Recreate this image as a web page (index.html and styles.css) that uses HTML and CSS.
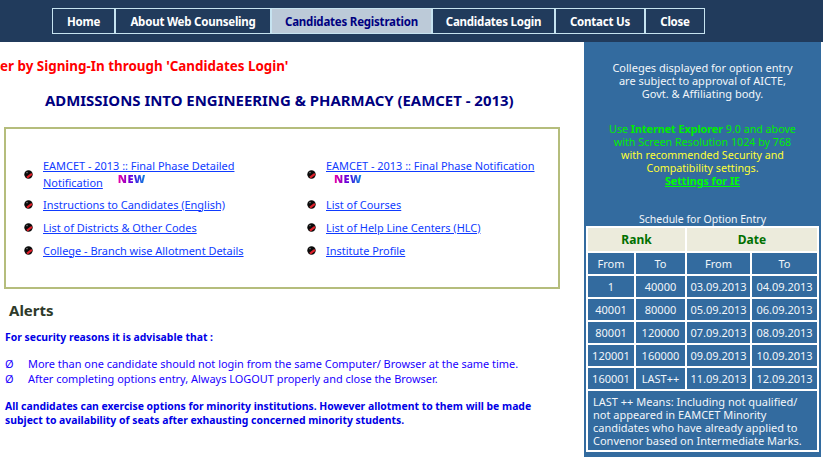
FILE: index.html
```html
<!DOCTYPE html>
<html lang="en">
<head>
<meta charset="utf-8">
<title>EAMCET 2013</title>
<link rel="stylesheet" href="styles.css">
</head>
<body>
<svg class="defs" width="0" height="0" aria-hidden="true"><defs>
  <symbol id="ball" viewBox="0 0 9 9"><circle cx="4.5" cy="4.5" r="4.2" fill="#0a0a0a"/><path d="M3 7.6 7.9 3.8" stroke="#e0202a" stroke-width="2.2"/><circle cx="3" cy="2.6" r=".8" fill="#777"/></symbol>
</defs></svg>
<header class="top">
  <nav class="nav">
    <a class="nav-item w-home">Home</a>
    <a class="nav-item w-about">About Web Counseling</a>
    <a class="nav-item w-reg active">Candidates Registration</a>
    <a class="nav-item w-login">Candidates Login</a>
    <a class="nav-item w-contact">Contact Us</a>
    <a class="nav-item w-close">Close</a>
  </nav>
</header>
<div class="page">
  <main class="content">
    <p class="ticker">er by Signing-In through 'Candidates Login'</p>
    <h1 class="title">ADMISSIONS INTO ENGINEERING &amp; PHARMACY (EAMCET - 2013)</h1>
    <section class="links">
      <div class="link-row"><svg class="ball"><use href="#ball"/></svg><div><a href="#">EAMCET - 2013 :: Final Phase Detailed<br>Notification</a><span class="new new-a">NEW</span></div></div>
      <div class="link-row"><svg class="ball"><use href="#ball"/></svg><div><a href="#">EAMCET - 2013 :: Final Phase Notification</a><br><span class="new new-b">NEW</span></div></div>
      <div class="link-row"><svg class="ball"><use href="#ball"/></svg><a href="#">Instructions to Candidates (English)</a></div>
      <div class="link-row"><svg class="ball"><use href="#ball"/></svg><a href="#">List of Courses</a></div>
      <div class="link-row"><svg class="ball"><use href="#ball"/></svg><a href="#">List of Districts &amp; Other Codes</a></div>
      <div class="link-row"><svg class="ball"><use href="#ball"/></svg><a href="#">List of Help Line Centers (HLC)</a></div>
      <div class="link-row"><svg class="ball"><use href="#ball"/></svg><a href="#">College - Branch wise Allotment Details</a></div>
      <div class="link-row"><svg class="ball"><use href="#ball"/></svg><a href="#">Institute Profile</a></div>
    </section>
    <h2 class="alerts">Alerts</h2>
    <p class="strong sec">For security reasons it is advisable that :</p>
    <ul class="notes">
      <li><span class="mark">Ø</span>More than one candidate should not login from the same Computer/ Browser at the same time.</li>
      <li><span class="mark">Ø</span>After completing options entry, Always LOGOUT properly and close the Browser.</li>
    </ul>
    <p class="strong minority">All candidates can exercise options for minority institutions. However allotment to them will be made<br>subject to availability of seats after exhausting concerned minority students.</p>
  </main>
  <aside class="side">
    <p class="approval">Colleges displayed for option entry<br>are subject to approval of AICTE,<br>Govt. &amp; Affiliating body.</p>
    <p class="ie"><span class="green">Use <b>Internet Explorer</b> 9.0 and above<br>with Screen Resolution 1024 by 768</span><br><span class="yellow">with recommended Security and<br>Compatibility settings.</span><br><a class="ie-link" href="#">Settings for IE</a></p>
    <p class="cap">Schedule for Option Entry</p>
    <table class="sched">
      <colgroup><col class="c1"><col class="c2"><col class="c3"><col class="c4"></colgroup>
      <tr class="head"><th colspan="2">Rank</th><th colspan="2">Date</th></tr>
      <tr><td>From</td><td>To</td><td>From</td><td>To</td></tr>
      <tr><td>1</td><td>40000</td><td>03.09.2013</td><td>04.09.2013</td></tr>
      <tr><td>40001</td><td>80000</td><td>05.09.2013</td><td>06.09.2013</td></tr>
      <tr><td>80001</td><td>120000</td><td>07.09.2013</td><td>08.09.2013</td></tr>
      <tr><td>120001</td><td>160000</td><td>09.09.2013</td><td>10.09.2013</td></tr>
      <tr><td>160001</td><td>LAST++</td><td>11.09.2013</td><td>12.09.2013</td></tr>
      <tr><td class="foot" colspan="4">LAST ++ Means: Including not qualified/<br>not appeared in EAMCET Minority<br>candidates who have already applied to<br>Convenor based on Intermediate Marks.</td></tr>
    </table>
  </aside>
</div>
</body>
</html>
```
FILE: styles.css
```css
* { box-sizing: border-box; }
html, body { margin: 0; height: 457px; overflow: hidden; background: #fff; }
body { font-family: "Noto Sans", "DejaVu Sans", sans-serif; font-size: 11px; }
p, h1, h2, ul { margin: 0; padding: 0; }
.defs { position: absolute; }

.top { height: 42px; background: #213b5c; padding: 8px 0 0 52px; }
.nav { display: flex; height: 26px; border: 1px solid #c6e3f0; width: 653px; }
.nav-item { display: flex; align-items: center; justify-content: center; color: #fff; font-weight: 700; font-size: 11.5px; letter-spacing: -.22px; border-right: 2px solid #c6e3f0; }
.nav-item:last-child { border-right: 0; }
.w-home { width: 63px; }
.w-about { width: 156px; }
.w-reg { width: 161px; }
.w-login { width: 123px; }
.w-contact { width: 90px; }
.w-close { flex: 1; }
.active { background: #bccad8; color: #000080; }

.page { display: flex; height: 415px; }
.content { width: 584px; }
.side { width: 237px; background: #336b9f; color: #f2f6fa; text-align: center; font-size: 11px; line-height: 13px; }

.ticker { color: #f00; font-weight: 700; font-size: 13.4px; line-height: 16px; margin-top: 16px; white-space: nowrap; }
.title { color: #000080; font-size: 14.93px; font-weight: 700; line-height: 18px; margin: 17px 0 0 45px; white-space: nowrap; }

.links { margin: 18px 0 0 4px; width: 556px; height: 162px; border: 2px solid #b5bd7c; padding: 26px 0 0 18px; display: grid; grid-template-columns: 283px 1fr; grid-auto-rows: 23px; grid-template-rows: 38px; align-items: center; }
.link-row { display: flex; align-items: center; gap: 10px; font-size: 10.95px; line-height: 16px; white-space: nowrap; }
.link-row a { color: #0f3bff; }
.ball { width: 9px; height: 9px; flex: none; }
.new { display: inline-block; font-size: 11px; font-weight: 900; line-height: 0; letter-spacing: .4px; background: linear-gradient(90deg, #f000a0, #5a00e0 50%, #0090e0); -webkit-background-clip: text; background-clip: text; color: transparent; padding: 5px 0; }
.new-a { margin-left: 15px; vertical-align: 4px; }
.new-b { margin-left: 8px; vertical-align: 3px; }

.alerts { font-size: 15px; font-weight: 700; color: #2e3a2a; line-height: 20px; margin: 11px 0 0 9px; }
.strong { color: #0000e6; font-weight: 700; font-size: 10.4px; }
.sec { line-height: 14px; margin: 10px 0 0 5px; }
.notes { list-style: none; color: #1a00ff; font-size: 10.95px; line-height: 15px; margin: 12px 0 0 5px; white-space: nowrap; }
.mark { display: inline-block; width: 23px; }
.minority { line-height: 14px; margin: 13px 0 0 5px; white-space: nowrap; }

.approval { margin-top: 19px; }
.ie { margin-top: 23px; font-size: 10.7px; }
.green { color: #00ee00; }
.yellow { color: #ffff33; }
.ie-link { color: #00ff00; font-weight: 700; }
.cap { margin-top: 24px; line-height: 14px; font-size: 10.5px; }

.sched { margin: 0 0 0 2px; width: 231px; table-layout: fixed; border-collapse: separate; border-spacing: 0; border: 1px solid #fff; }
.c1 { width: 48px; }
.c2 { width: 51px; }
.c3 { width: 65px; }
.c4 { width: 67px; }
.sched th, .sched td { border: 1px solid #fff; padding: 0; text-align: center; height: 23px; }
.head th { height: 25px; background: #ecebdc; color: #007000; font-size: 12px; font-weight: 700; }
.sched .foot { text-align: left; padding: 4px 5px 3px; height: 60px; }
```
